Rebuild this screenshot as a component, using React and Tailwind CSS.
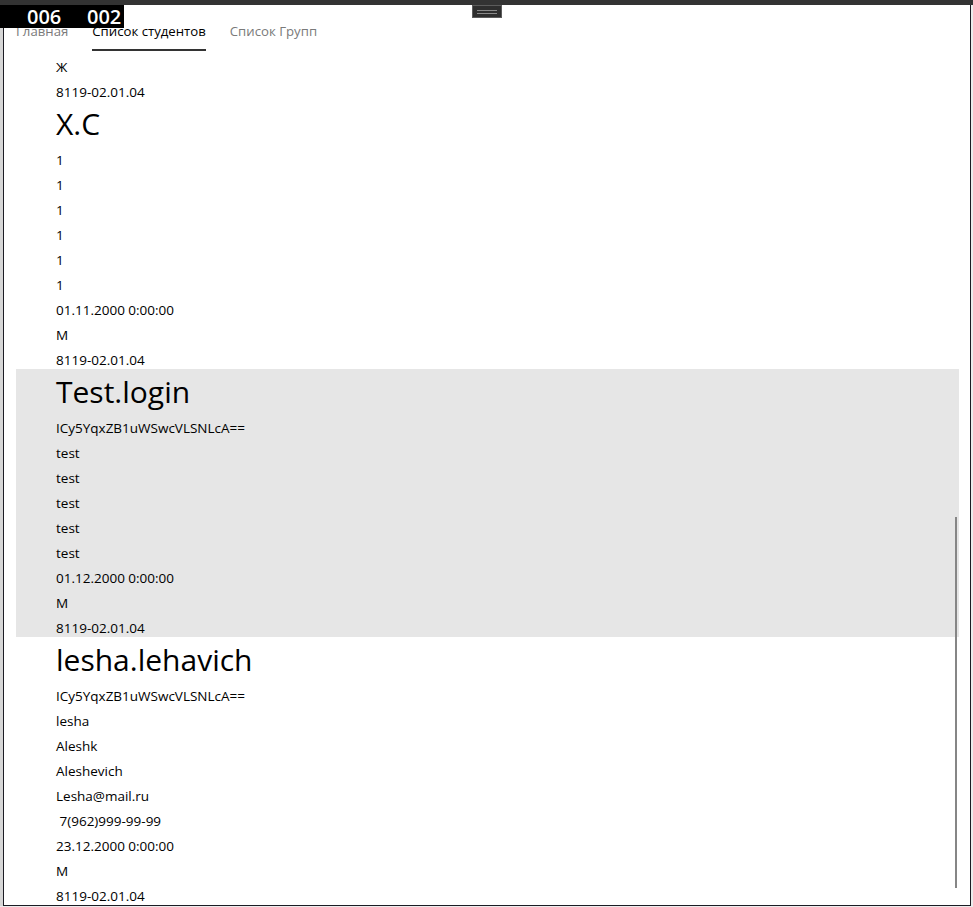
import React from 'react';

const font = { fontFamily: '"Open Sans", "Noto Sans", sans-serif' };

const students = [
  { login: null, lines: ['Ж', '8119-02.01.04'] },
  { login: 'X.C', lines: ['1', '1', '1', '1', '1', '1', '01.11.2000 0:00:00', 'M', '8119-02.01.04'] },
  {
    login: 'Test.login',
    selected: true,
    lines: ['ICy5YqxZB1uWSwcVLSNLcA==', 'test', 'test', 'test', 'test', 'test', '01.12.2000 0:00:00', 'M', '8119-02.01.04'],
  },
  {
    login: 'lesha.lehavich',
    lines: ['ICy5YqxZB1uWSwcVLSNLcA==', 'lesha', 'Aleshk', 'Aleshevich', 'Lesha@mail.ru', ' 7(962)999-99-99', '23.12.2000 0:00:00', 'M', '8119-02.01.04'],
  },
];

function StudentItem({ student }) {
  return (
    <div className={`pl-[40px] ${student.selected ? 'bg-[#e6e6e6]' : ''}`}>
      {student.login && (
        <div className="h-[43px] pt-[3px] text-[30px] leading-[40px] font-[380] text-black">{student.login}</div>
      )}
      {student.lines.map((line, i) => (
        <div key={i} className="h-[25px] pt-[7px] text-[13.5px] leading-[18px] text-black whitespace-pre">
          {line}
        </div>
      ))}
    </div>
  );
}

export default function App() {
  const tabs = ['Главная', 'Список студентов', 'Список Групп'];
  return (
    <div className="relative w-[973px] h-[907px] overflow-hidden bg-[#ececec] flex flex-col" style={font}>
      <div className="h-[5px] bg-[#333333] shrink-0" />
      <div className="flex h-[901px] shrink-0">
        <div className="w-[3px] bg-[#d6d6d6]" />
        <div className="w-[968px] bg-white border-l border-r border-b border-[#1c1c24] flex flex-col overflow-hidden">
          <div className="flex gap-[24px] pl-[12px] h-[46px] shrink-0">
            {tabs.map((t, i) => (
              <div
                key={t}
                className={`h-[46px] pt-[17px] text-[13.2px] leading-[18px] border-b-2 ${
                  i === 1 ? 'border-[#333333] text-black' : 'border-transparent text-[#7a7a7a]'
                }`}
              >
                {t}
              </div>
            ))}
          </div>
          <div className="relative flex-1 overflow-hidden">
            <div className="ml-[12px] mr-[11px]">
              {students.map((s, i) => (
                <StudentItem key={i} student={s} />
              ))}
            </div>
            <div className="absolute right-[13px] top-[466px] w-[2px] h-[371px] bg-[#868686]" />
          </div>
        </div>
      </div>

      {/* frame counter overlay */}
      <div className="absolute left-0 top-[5px] w-[124px] h-[23px] bg-black text-white text-[20px] leading-[23px] font-semibold">
        <span className="absolute left-[27px] top-0">006</span>
        <span className="absolute left-[87px] top-0">002</span>
      </div>

      {/* drag handle */}
      <div className="absolute left-[472px] top-[5px] w-[30px] h-[13px] bg-[#2e2e2e] border border-[#5c5c5c] flex flex-col items-center justify-center gap-[2px]">
        <div className="w-[20px] h-[1px] bg-[#8a8a8a]" />
        <div className="w-[20px] h-[1px] bg-[#8a8a8a]" />
      </div>
    </div>
  );
}
